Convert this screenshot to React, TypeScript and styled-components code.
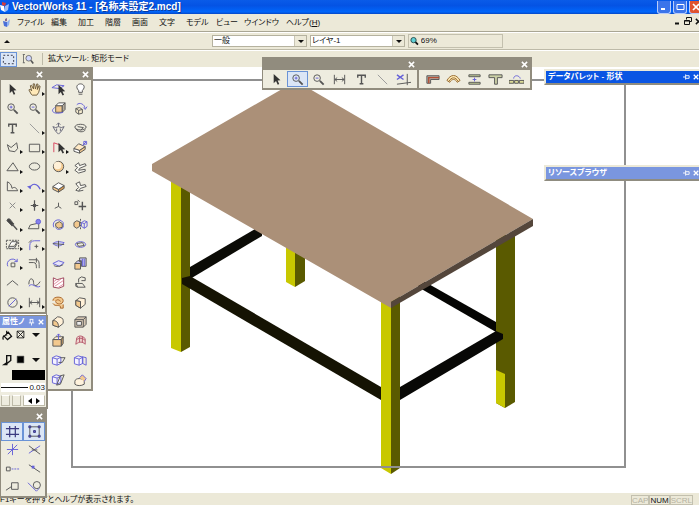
import React from "react";
import styled, { createGlobalStyle, css } from "styled-components";

const GlobalStyle = createGlobalStyle`
  * { box-sizing: border-box; }
  html, body, #root { height: 100%; }
  body {
    margin: 0;
    overflow: hidden;
    font: 8px/12px "Liberation Sans", "Noto Sans CJK JP", sans-serif;
    font-feature-settings: "palt";
    color: #111;
  }
  button, select, input { font: inherit; font-feature-settings: inherit; color: inherit; }
  button { border: 0; padding: 0; background: none; }
`;

const face = "#ece9d8";
const panel = "#eeecdf";
const shade = "#918c7e";

/* ---------- icons ---------- */

const blue = "#6460d8";
const tan = "#f3c98e";
const cursor = <path d="M5 2v10l2.500-2.300 1.800 3.800 1.600-.8-1.700-3.700 3-.2z" fill="#333" stroke="none" />;
const magnifier = (
  <>
    <circle cx="6.500" cy="6.500" r="3.500" />
    <path d="M9.500 9.500l4 4" strokeWidth="2" />
    <path d="M5 6.500h3" stroke={blue} />
  </>
);
const block = (
  <>
    <path d="M2 8l6 3v3l-6-3z" fill={tan} />
    <path d="M8 11l6-4v3l-6 4z" fill="#d79b52" />
    <path d="M2 8l6-4 6 3-6 4z" fill="#fff" />
  </>
);
const cube = (
  <>
    <path d="M3 6h7v7H3z" fill={tan} />
    <path d="M3 6l3-3h7l-3 3z" fill="#fff" />
    <path d="M10 6l3-3v7l-3 3z" fill="#b6ad9d" />
  </>
);
const wireCube = <path d="M1.500 5l4-2 5 1.500V11l-4 2-5-1.500zM1.500 5l5 1.500 4-2M6.500 6.500V13" stroke={blue} fill="#f4f2ff" />;

const glyphs: Record<string, React.ReactNode> = {
  arrow: cursor,
  hand: (
    <path
      d="M4.500 13L2 8.500 3 7.500l2 2L3.500 4l1.200-.5L7 7.500 6.500 2H8l1 5.500L10.500 2l1.300.5L11 8l1.800-4 1.200.6L12.500 11l-2 3h-5z"
      fill="#ffe9b8"
      stroke="#6b5a3c"
    />
  ),
  zoomIn: (
    <>
      {magnifier}
      <path d="M6.500 5v3" stroke={blue} />
    </>
  ),
  zoomOut: magnifier,
  text: <path d="M4 6V3.500h8V6M8 3.500V12M6 12.500h4" strokeWidth="1.500" />,
  line: <path d="M3 3l10 10" stroke="#999" />,
  poly: <path d="M2.500 5l4 3 6-5 1 6-3 3.500-6-1z" />,
  rect: <path d="M2.500 4.500h11v8h-11z" />,
  triangle: <path d="M2 12.500h12L8.500 4z" />,
  oval: <ellipse cx="8" cy="8" rx="5.500" ry="3.800" />,
  freeform: <path d="M2.500 3v9.500h11C12 9 10 8 7.500 10 7 6 5 4 2.500 3z" />,
  bezier: (
    <>
      <path d="M3 10C5 4 11 4 14 11" stroke={blue} strokeWidth="1.300" />
      <path d="M0 8l4-1v4z" fill={blue} stroke="none" />
    </>
  ),
  cross: <path d="M5 5l6 6M11 5l-6 6" stroke="#888" />,
  locus: <path d="M8 2.500v11M4 8h8M7 7h2v2H7z" strokeWidth="1.300" />,
  dropper: (
    <>
      <path d="M3 2l2 0 4 5-2 2-5-5z" fill="#444" />
      <path d="M8 8l5 5.500M7 9.500L9.500 7" strokeWidth="1.500" />
    </>
  ),
  reshape: (
    <>
      <path d="M1.500 12.500h11v-6l-9 2z" />
      <circle cx="12" cy="5" r="2.500" fill="#8580ec" stroke={blue} />
    </>
  ),
  offset: (
    <>
      <path d="M1.500 3.500h13v9h-13z" strokeDasharray="2 1" />
      <path d="M4 10l3-5h6l-3 5zM4 10v2h6l3-5V5" fill="#fff" />
    </>
  ),
  fillet: (
    <>
      <path d="M3 14V9c0-3 2-5 5-5h6" stroke={blue} />
      <path d="M5 3L2 6M8 10h4M10 8v4" />
    </>
  ),
  rotateBox: (
    <>
      <path d="M3 11C0 5 9 0 13 6M13 6V3M13 6h-3" stroke={blue} />
      <path d="M6.500 7.500h4v4h-4z" />
    </>
  ),
  trim: <path d="M2 4h8c3 0 3 3 3 9M2 7h5c3 0 3 3 3 6M10 2v5" />,
  chevron: <path d="M2 11l6-5 6 5" />,
  curve: (
    <>
      <path d="M2 10C2 2 7 3 7 8s4 4 7-1" />
      <path d="M2 12c4-5 7 3 12 0" stroke={blue} />
    </>
  ),
  circleSlash: (
    <>
      <circle cx="8" cy="8" r="5" />
      <path d="M4 12l8-8" stroke={blue} />
    </>
  ),
  dimension: <path d="M2.500 3v10M13.500 3v10M3 8h10M5.500 6L3 8l2.500 2M10.500 6L13 8l-2.500 2" />,
  planeCursor: (
    <>
      <path d="M1 6l5-3 8 1-5 3z" stroke={blue} />
      <g transform="translate(3 1)">{cursor}</g>
    </>
  ),
  bulb: <path d="M6 11V9C2 5 5 2 8 2s6 3 2 7v2zM6 13h4" fill="#fff" />,
  orbitCube: (
    <>
      <g transform="translate(2 -1)">{cube}</g>
      <path d="M4 7c-6 4 0 8 9 5" stroke={blue} />
    </>
  ),
  turnCube: (
    <>
      <path d="M3 8l4-1 3 2v4l-4 1-3-2zM3 8l3 2v4M6 10l4-1" fill="#f7edcf" />
      <path d="M4 4c3-3 8-1 9 4M11 7l2 2 2-3" stroke={blue} />
    </>
  ),
  fly: <path d="M8 2v4l3 1 3-1-3 5-3 3-3-3-3-5 3 1 3-1M6 4l2-2 2 2M6 8v3M10 8v3" stroke="#667" />,
  walk: (
    <>
      <ellipse cx="8" cy="6.500" rx="6" ry="3" />
      <path d="M3 8c2 5 10 4 10 1M5 6l6 1-3 3" />
    </>
  ),
  redCursor: (
    <>
      <path d="M3 13V3l6 2v6" stroke="#d8435c" />
      <g transform="translate(3 1)">{cursor}</g>
    </>
  ),
  slab: (
    <>
      <path d="M1 9l6 2v3l-6-2z" fill="#fff" />
      <path d="M7 11l6-4v3l-6 4z" fill={tan} />
      <path d="M1 9l5-5 7 3-6 4z" fill="#ffe9c4" />
      <path d="M10 6l4-4M11.500 1.500h3v3h-3z" stroke={blue} />
    </>
  ),
  sphere: (
    <>
      <circle cx="8" cy="8" r="5.500" fill={tan} />
      <circle cx="7" cy="7" r="4" fill="#fff0d7" stroke="none" />
    </>
  ),
  ribbon: <path d="M2 7l4-3 1 3 6-2 1 2-7 3-1 2 7-1v2l-7 2-4-3 3-3z" fill="#faf9f1" />,
  block,
  sheet: <path d="M3 5l4-2 1 4 5-1 1 2-6 2-2 3 5-1M3 5l3 4-3 3 3 1" fill="#faf9f1" />,
  axis: <path d="M8 5v4l-4 2M8 9l3 2" />,
  locus3d: (
    <>
      <path d="M10 4v9M6 9h8" strokeWidth="1.500" />
      <path d="M2 4h3v3H2zM5 2l2 2" />
    </>
  ),
  spin: (
    <>
      <path d="M3 11C0 4 9 0 13 6v5c-3 3-7 3-8 0" stroke={blue} />
      <path d="M5 7l4-2 3 2v4l-4 1-3-2z" fill={tan} />
    </>
  ),
  mirror: (
    <>
      <path d="M1 6l3-2 3 1v5l-3 2-3-2z" fill={tan} />
      <path d="M8 2v12" strokeDasharray="2 1" />
      <path d="M9 6l3-2 3 1v5l-3 2-3-2zM9 6l3 1 3-2M12 7v5" stroke={blue} />
    </>
  ),
  planes: (
    <>
      <path d="M2 7c4-3 8-2 12-1-3 4-7 5-12 1z" fill="#dfddf9" stroke={blue} />
      <path d="M8 4v8M2 7l12 1" />
    </>
  ),
  planeTurn: (
    <>
      <ellipse cx="8" cy="8" rx="5.500" ry="3" stroke={blue} />
      <path d="M4 7l6-1 2 3-6 1z" />
    </>
  ),
  planeFlat: (
    <>
      <path d="M2 8l6-3 6 2-5 4z" fill="#e6e4f8" stroke={blue} />
      <path d="M3 10c2 2 8 1 10-1" />
    </>
  ),
  blocks: (
    <>
      <path d="M2 8h6v6H2z" fill={tan} />
      <path d="M2 8l3-3h4L8 8zM7 2h7v9H9V6H7z" fill="#c4c1ea" />
      <path d="M10 3v8M12 3v8" stroke={blue} />
    </>
  ),
  hatch: (
    <>
      <path d="M2.500 3l4 2 7-2v9l-5 2-6-1z" fill="#fff" stroke="#9b4058" />
      <path d="M3 7l3-2M3 10l8-6M4 12l9-6M8 13l5-3" stroke="#e08ca0" />
    </>
  ),
  extrude: <path d="M3 9h7l3 4H5zM6 8V4l3-2 4 1v3M9 6h4M3 9v3l2 1" />,
  spiral: <path d="M2 6c0-5 11-5 11 0s-8 4-8 1 5-2 5 0M2 9c3 4 5 1 8 3v2h3v-4" fill={tan} stroke="#a8642b" />,
  solid: (
    <>
      <path d="M3 6l5 1v7l-5-3z" fill={tan} />
      <path d="M3 6l4-3 6 1v6l-5 4V7z" fill="#fff0d7" />
      <path d="M3 6l5 1v7l-5-3z" fill={tan} />
    </>
  ),
  filletCube: (
    <>
      <path d="M2 7l5-4c4 0 6 2 6 4v3l-5 4-6-2z" fill="#fff0d7" />
      <path d="M2 7c4 0 6 2 6 7l-6-2z" fill={tan} />
    </>
  ),
  shell: (
    <>
      <path d="M2 6h9v8H2zM2 6l3-3h9v8l-3 3M11 6l3-3" fill="#d5c6b2" />
      <path d="M4 8h5v4H4z" fill="#eee" />
    </>
  ),
  pushUp: (
    <>
      <path d="M2 7l3-3h8l-2 3z" fill="#fff0d7" />
      <path d="M2 7h9v7H2z" fill={tan} />
      <path d="M11 7l2-3v7l-2 3z" fill="#c9a06a" />
      <path d="M8 7V1M6 3l2-2 2 2" stroke={blue} />
    </>
  ),
  net: <path d="M3 12l1-7c3-3 6-2 9 1v6c-3-3-6-3-10 0zM4 7c3-2 6-2 9 1M7 4v6M10 4v6" stroke="#b4596b" fill="#f0d5cf" />,
  cubeCut: (
    <>
      {wireCube}
      <path d="M10 5h5l-3 5H8" />
    </>
  ),
  cubeSide: (
    <>
      {wireCube}
      <path d="M10 4l4 1v8l-4-2z" stroke={blue} />
    </>
  ),
  cubeSlant: (
    <>
      {wireCube}
      <path d="M14 3l-4 10-4 1 4-10z" />
    </>
  ),
  drum: (
    <>
      <path d="M2 10c0-4 9-4 10 0v3c-3 2-8 2-10 0z" fill="#fff3dd" />
      <path d="M7 6l3-3 4 4-2 3" fill={tan} stroke={blue} />
    </>
  ),
  grid: <path d="M5 2v12M11 2v12M1 5h14M1 11h14" stroke="#3b3a80" strokeWidth="1.300" />,
  snapBox: (
    <>
      <path d="M3 3h10v10H3z" />
      <path d="M2 2h2v2H2zM12 2h2v2h-2zM2 12h2v2H2zM12 12h2v2h-2zM7 7h2v2H7z" fill={blue} stroke="#3b3a80" />
    </>
  ),
  star: <path d="M8 2v12M3 13L13 3M2 8h12" stroke={blue} />,
  crossing: (
    <>
      <path d="M2 12l12-8" stroke={blue} />
      <path d="M2 4l12 9M5 8.500h6" />
    </>
  ),
  boxDash: (
    <>
      <path d="M1.500 6.500h4v4h-4z" />
      <path d="M7 8.500h9" stroke={blue} strokeDasharray="2 1" />
    </>
  ),
  slopeDot: (
    <>
      <path d="M2 4l12 8" />
      <path d="M5 5h3v3H5z" fill={blue} stroke="none" />
    </>
  ),
  boxEdge: <path d="M7 4h7v7H7zM1 12l6-4" />,
  circleEdge: (
    <>
      <circle cx="10.500" cy="6.500" r="3.800" />
      <path d="M1 4l9 9 3-3" stroke={blue} />
    </>
  ),
  scissors: (
    <>
      <path d="M1 3l7 5M1 8l7-5" stroke={blue} strokeWidth="1.500" />
      <path d="M1 13l15-2M12 2v12" />
    </>
  ),
  wall: (
    <>
      <path d="M2 12V4h13v4H6v4z" fill="#b3aaa0" />
      <path d="M4 12V6h11" stroke="#b34f35" strokeWidth="1.500" />
    </>
  ),
  arcWall: (
    <>
      <path d="M1 9c4-7 10-7 14 0l-3 2c-2-4-6-4-8 0z" fill="#ffe9b4" stroke="#93682d" />
      <path d="M3 10c3-5 7-5 10 0" stroke="#93682d" />
    </>
  ),
  wallJoin: (
    <>
      <path d="M2 3h12v2H2zM2 11h12v2H2z" fill="#c5cf9a" />
      <path d="M8 6v4M6 8h4" stroke={blue} />
    </>
  ),
  wallTee: <path d="M1 3h14v3h-5v7H7V6H1z" fill="#cbd0a6" />,
  wallHeal: (
    <>
      <path d="M0 9h5v3H0zM11 9h5v3h-5zM6 9h4v3H6z" fill="#dd9" />
      <path d="M5 7c0-4 6-4 7 0" stroke={blue} />
    </>
  ),
  marquee: <path d="M2.500 3.500h11v9h-11z" strokeDasharray="2 2" stroke="#334" />,
  areaZoom: (
    <>
      <path d="M2 2v11M1 2h3M1 13h3" />
      <circle cx="9" cy="7" r="3.800" fill="#cfd6ff" />
      <path d="M12 10l3 4" strokeWidth="2" />
    </>
  ),
  bucket: <path d="M4 9l5-5 4 5-5 4zM7 2v6M4 8c-2 2-2 4-1 5" strokeWidth="1.500" stroke="#111" />,
  noFill: <path d="M2 2h12v12H2zM2 2l12 12M14 2L2 14" strokeWidth="1.500" stroke="#111" />,
  pen: <path d="M7 2h5v6l-4 3H7zM7 11l-3 2h4" strokeWidth="1.700" stroke="#111" />,
  black: <path d="M2 2h12v12H2z" fill="#000" />,
};

const Svg = styled.svg`
  display: block;
  flex: none;
  fill: none;
  stroke: #555;
`;

const Icon = ({ name, size = 15 }: { name: string; size?: number }) => (
  <Svg width={size} height={size} viewBox="0 0 16 16" aria-hidden="true">
    {glyphs[name]}
  </Svg>
);

const Caret = styled.span`
  width: 0;
  height: 0;
  flex: none;
  border: 4px solid transparent;
  border-width: 4px 4px 0;
  border-top-color: #111;
`;

const Cross = ({ size = 7 }: { size?: number }) => (
  <svg width={size} height={size} viewBox="0 0 8 8" fill="none" stroke="currentColor" strokeWidth="1.700" aria-hidden="true">
    <path d="M1 1l6 6M7 1L1 7" />
  </svg>
);

const Pin = ({ upright }: { upright?: boolean }) => (
  <svg width="7" height="8" viewBox="0 0 8 8" fill="none" stroke="currentColor" aria-hidden="true">
    {upright ? <path d="M2.500 1v4M5.500 1v4M1 5h6M4 5v3M2 1h4" /> : <path d="M3 1v6M3 2.500h4v3H3M0 4h3" />}
  </svg>
);

/* ---------- window frame ---------- */

const Window = styled.div`
  position: relative;
  display: flex;
  flex-direction: column;
  height: 100vh;
  overflow: hidden;
  background: ${face};
`;

const TitleBar = styled.header`
  display: flex;
  align-items: center;
  height: 14px;
  flex: none;
  gap: 3px;
  padding-right: 1px;
  color: #fff;
  background: linear-gradient(#0a5be8, #0453e4 40%, #0066fb 85%, #0646c4);
`;

const AppTitle = styled.h1`
  flex: 1;
  margin: 0;
  font: bold 10px/12px "Liberation Sans", "Noto Sans CJK JP", sans-serif;
  text-shadow: 1px 1px #0a3a9c;
  white-space: nowrap;
`;

const WindowButtons = styled.div`
  display: flex;
  gap: 2px;
  margin-right: -5px;
`;

const WindowButton = styled.button<{ $close?: boolean }>`
  display: grid;
  place-items: center;
  width: 14px;
  height: 13px;
  border: 1px solid #b9cdfa;
  border-top: 0;
  border-radius: 0 0 3px 3px;
  color: #fff;
  background: ${(p) => (p.$close ? "#e0532f" : "#3b74ea")};
`;

const MenuBar = styled.nav`
  display: flex;
  align-items: center;
  flex: none;
  height: 18px;
  padding-left: 2px;
  border-bottom: 1px solid #a9a694;
`;

const MenuList = styled.div`
  flex: 1;
  display: grid;
  grid-template-columns: 34px repeat(5, 27px) 30px 28px 42px auto;
  justify-content: start;
  padding-left: 5px;
`;

const MenuItem = styled.button`
  text-align: left;
  white-space: nowrap;
`;

const DocButtons = styled.div`
  display: flex;
  gap: 3px;
  margin-right: -3px;
  color: #111;
`;

const Bar = styled.div`
  display: flex;
  align-items: center;
  flex: none;
  height: 18px;
  border-top: 1px solid #fff;
  border-bottom: 1px solid #bdbaa8;
`;

const SelectorBar = styled(Bar)`
  gap: 3px;
  padding-left: 4px;
`;

const UpMark = styled.span`
  border: 3px solid transparent;
  border-width: 0 3px 3px;
  border-bottom-color: #111;
  margin-right: 199px;
`;

const SelectBox = styled.label`
  position: relative;
  display: flex;
  align-items: center;
  flex: 0 1 95px;
  height: 12px;
  border: 1px solid #b5b29f;
  background: #fff;

  select {
    appearance: none;
    width: 100%;
    height: 10px;
    padding: 0 14px 0 1px;
    border: 0;
    line-height: 10px;
    background: transparent;
  }
`;

const SelectArrow = styled.span`
  position: absolute;
  inset: 0 0 0 auto;
  width: 12px;
  display: grid;
  place-items: center;
  border-left: 1px solid #c9c6b5;
  background: ${face};
  pointer-events: none;

  span { border-width: 3px 3px 0; }
`;

const ZoomBox = styled.label`
  display: flex;
  align-items: center;
  gap: 2px;
  flex: 0 1 95px;
  height: 14px;
  padding-left: 1px;
  border: 1px solid #c3c0ae;

  input {
    width: 100%;
    min-width: 0;
    height: 11px;
    padding: 0;
    border: 0;
    background: transparent;
  }
`;

const ModeBar = styled(Bar)`
  height: 17px;
  gap: 5px;
  border-bottom: 0;
`;

const ModeText = styled.span`
  padding-left: 5px;
  border-left: 1px solid #bdbaa8;
  margin-left: 3px;
`;

const Workspace = styled.main`
  flex: 1;
  min-height: 0;
  background: #fff;

  svg { display: block; width: 100%; height: 100%; }
`;

const StatusBar = styled.footer`
  display: flex;
  align-items: flex-end;
  justify-content: space-between;
  flex: none;
  height: 12px;
  padding-right: 6px;
`;

const Help = styled.span`
  line-height: 10px;
  white-space: nowrap;
`;

const Locks = styled.div`
  display: flex;
`;

const Lock = styled.span<{ $on?: boolean }>`
  height: 10px;
  border: 1px solid #c3c0ae;
  line-height: 9px;
  color: ${(p) => (p.$on ? "#111" : "#b5b2a2")};
`;

/* ---------- floating palettes ---------- */

type Place = { $top: number; $left?: number; $right?: number; $width: number };

const Palette = styled.section<Place>`
  position: absolute;
  top: ${(p) => p.$top}px;
  ${(p) => (p.$right !== undefined ? css`right: ${p.$right}px;` : css`left: ${p.$left}px;`)}
  width: ${(p) => p.$width}px;
  border: solid ${shade};
  border-width: 1px 2px 2px 1px;
  background: ${panel};
`;

const PaletteHead = styled.div<{ $tone?: "active" | "idle" }>`
  display: flex;
  align-items: center;
  gap: 3px;
  height: 12px;
  padding: 0 2px;
  color: #fff;
  font-weight: bold;
  white-space: nowrap;
  background: ${(p) => (p.$tone === "active" ? "#0a55e3" : p.$tone === "idle" ? "#7a96df" : shade)};

  h2 {
    flex: 1;
    margin: 0;
    font: inherit;
  }

  button { display: flex; }
`;

const ToolGrid = styled.div<{ $rows: number; $height: number }>`
  display: grid;
  grid-template-columns: 1fr 1fr;
  grid-template-rows: repeat(${(p) => p.$rows}, 1fr);
  height: ${(p) => p.$height}px;
`;

const ToolRow = styled.div`
  display: flex;
  height: 18px;
  padding: 1px 3px;
`;

const ToolButton = styled.button<{ $on?: boolean; $more?: boolean }>`
  position: relative;
  display: flex;
  align-items: center;
  justify-content: center;
  flex: 1;
  min-width: 0;
  min-height: 0;
  ${(p) =>
    p.$on &&
    css`
      background: #dbe6f6;
      box-shadow: inset 0 0 0 1px #6a93d6;
    `}
  ${(p) =>
    p.$more &&
    css`
      &::after {
        content: "";
        position: absolute;
        right: 0;
        bottom: 3px;
        border: 2px solid transparent;
        border-width: 2px 0 2px 3px;
        border-left-color: #111;
      }
    `}
`;

const ModeButton = styled(ToolButton)`
  flex: 0 0 17px;
  height: 15px;
`;

const Docked = styled(Palette)`
  border-color: ${face} ${face} #8f8c80;
  border-width: 2px 0 2px 2px;
  background: ${face};

  ${PaletteHead} { padding-right: 0; }
`;

const AttributeBody = styled.div`
  display: grid;
  gap: 3px;
  padding: 1px;
`;

const AttributeRow = styled.div<{ $height: number }>`
  display: grid;
  grid-template-columns: 13px 13px 1fr;
  align-items: start;
  justify-items: center;
  height: ${(p) => p.$height}px;

  button { display: flex; }
  button:nth-child(2) { padding-top: 1px; }
  button:last-child { padding-top: 4px; }
`;

const Swatch = styled.button`
  height: 10px;
  margin-left: 11px;
  background: #000;
`;

const Thickness = styled.button`
  display: flex;
  align-items: center;
  height: 9px;
  gap: 1px;
  line-height: 9px;
  background: #fff;

  &::before {
    content: "";
    flex: 1;
    border-top: 1px solid #111;
  }
`;

const Markers = styled.div`
  display: grid;
  grid-template-columns: 9px 9px 1fr;
  gap: 2px;
  height: 11px;

  button {
    display: grid;
    place-items: center;
    border: 1px solid #bdbaa8;
    border-top-color: #fff;
  }
  button:last-child { background: #fff; }
`;

type Tool = [name: string, label: string, more?: boolean, on?: boolean];

const Tools = ({ items }: { items: Tool[] }) => (
  <>
    {items.map(([name, label, more, on]) => (
      <ToolButton key={label} aria-label={label} $more={more} $on={on}>
        <Icon name={name} />
      </ToolButton>
    ))}
  </>
);

const CloseHead = () => (
  <PaletteHead>
    <h2 />
    <button aria-label="閉じる">
      <Cross />
    </button>
  </PaletteHead>
);

const basicTools: Tool[] = [
  ["arrow", "セレクション"], ["hand", "パン", true],
  ["zoomIn", "拡大"], ["zoomOut", "縮小"],
  ["text", "文字"], ["line", "直線", true],
  ["poly", "多角形", true], ["rect", "四角形", true],
  ["triangle", "三角形", true], ["oval", "長円"],
  ["freeform", "曲線", true], ["bezier", "ベジェ", true],
  ["cross", "基準点", true], ["locus", "シンボル", true],
  ["dropper", "アイドロッパ", true], ["reshape", "変形", true],
  ["offset", "オフセット", true], ["fillet", "フィレット", true],
  ["rotateBox", "回転", true], ["trim", "トリミング"],
  ["chevron", "結合"], ["curve", "スプライン"],
  ["circleSlash", "直径", true], ["dimension", "寸法", true],
];

const modelTools: Tool[] = [
  ["planeCursor", "3Dセレクション"], ["bulb", "光源"],
  ["orbitCube", "フライオーバー"], ["turnCube", "視点回転"],
  ["fly", "フライスルー"], ["walk", "ウォークスルー"],
  ["redCursor", "3D変形", true], ["slab", "柱状体"],
  ["sphere", "球", true], ["ribbon", "曲面"],
  ["block", "直方体"], ["sheet", "面"],
  ["axis", "3D基準点"], ["locus3d", "3Dシンボル"],
  ["spin", "3D回転"], ["mirror", "3Dミラー"],
  ["planes", "作業平面"], ["planeTurn", "平面回転"],
  ["planeFlat", "平面移動"], ["blocks", "整列"],
  ["hatch", "断面"], ["extrude", "押し出し"],
  ["spiral", "螺旋"], ["solid", "ソリッド"],
  ["filletCube", "3Dフィレット"], ["shell", "シェル"],
  ["pushUp", "プッシュ"], ["net", "NURBS"],
  ["cubeCut", "切断"], ["cubeSide", "投影"],
  ["cubeSlant", "傾斜"], ["drum", "抽出"],
];

const snapTools: Tool[] = [
  ["grid", "グリッドスナップ", false, true], ["snapBox", "図形スナップ", false, true],
  ["star", "角度スナップ"], ["crossing", "交点スナップ"],
  ["boxDash", "スマートポイント"], ["slopeDot", "定点スナップ"],
  ["boxEdge", "スマートエッジ"], ["circleEdge", "接線スナップ"],
];

const viewTools: Tool[] = [
  ["arrow", "選択"], ["zoomIn", "拡大表示", false, true], ["zoomOut", "縮小表示"],
  ["dimension", "寸法線"], ["text", "文字入力"], ["line", "線"], ["scissors", "切り取り"],
];

const wallTools: Tool[] = [
  ["wall", "壁"], ["arcWall", "円弧壁"], ["wallJoin", "壁結合"], ["wallTee", "T字結合"], ["wallHeal", "壁修復"],
];

const menus = ["ファイル", "編集", "加工", "階層", "画面", "文字", "モデル", "ビュー", "ウインドウ", "ヘルプ(H)"];

const Drawing = () => (
  <svg viewBox="0 67 699 426" role="img" aria-label="テーブルの3Dモデル">
    {/* back leg */}
    <path d="M286 240h9v47l-9-5z" fill="#c8c800" />
    <path d="M295 240h10v41l-10 6z" fill="#5a5a00" />
    {/* left leg */}
    <path d="M171 175h10v177l-10-4z" fill="#c8c800" />
    <path d="M181 175h9v172l-9 5z" fill="#5a5a00" />
    {/* left rails */}
    <path d="M190 267l72-42v11l-72 43z" fill="#0b0b06" />
    <path d="M182 278l8-2 191 111v13L182 284z" fill="#151303" />
    {/* right leg */}
    <path d="M496 235h19v167l-10 6-9-5z" fill="#5a5a00" />
    <path d="M496 370l9 4v34l-9-5z" fill="#c8c800" />
    {/* right rails */}
    <path d="M418 278l78 44v10l-78-45z" fill="#050503" />
    <path d="M400 387l96-56 7 3v5l-103 61z" fill="#080806" />
    {/* front leg */}
    <path d="M381 295h10v179l-10-6z" fill="#c8c800" />
    <path d="M391 295h9v173l-9 6z" fill="#5a5a00" />
    {/* top */}
    <path d="M152 164L296 81l237 138-142 83v6L152 171z" fill="#ab9078" />
    <path d="M391 302l142-83v7l-142 82z" fill="#54463b" />
    <path d="M72 80h553v387H72z" fill="none" stroke="#909090" strokeWidth="2" />
  </svg>
);

const AppLogo = () => (
  <svg width="9" height="11" viewBox="0 0 9 11" aria-hidden="true">
    <path d="M0 3l4 1 1 6-4-2z" fill="#fff" />
    <path d="M5 4l4-2-1 6-3 2z" fill="#9dbbf5" />
    <path d="M2 0l4 1-1 3-3-1z" fill="#d33c3c" />
  </svg>
);

const DocLogo = () => (
  <svg width="10" height="10" viewBox="0 0 10 10" aria-hidden="true">
    <path d="M1 3l4 1v5L2 8z" fill="#4a6fd8" />
    <path d="M5 4l3-3-1 6-2 2z" fill="#8fb0f0" />
    <path d="M3 1l2-1v3H3z" fill="#8a6a8a" />
  </svg>
);

const DockHead = ({ title, tone }: { title: string; tone: "active" | "idle" }) => (
  <PaletteHead $tone={tone}>
    <h2>{title}</h2>
    <button aria-label="固定">
      <Pin />
    </button>
    <button aria-label="閉じる">
      <Cross size={6} />
    </button>
  </PaletteHead>
);

export default function App() {
  return (
    <Window>
      <GlobalStyle />
      <TitleBar>
        <AppLogo />
        <AppTitle>VectorWorks 11 - [名称未設定2.mcd]</AppTitle>
        <WindowButtons>
          <WindowButton aria-label="最小化">
            <svg width="8" height="8" viewBox="0 0 8 8"><path d="M1 6h4" stroke="#fff" strokeWidth="2" /></svg>
          </WindowButton>
          <WindowButton aria-label="最大化">
            <svg width="9" height="8" viewBox="0 0 9 8"><path d="M1 1.500h7v5H1z" fill="none" stroke="#fff" /></svg>
          </WindowButton>
          <WindowButton aria-label="終了" $close>
            <Cross size={8} />
          </WindowButton>
        </WindowButtons>
      </TitleBar>

      <MenuBar>
        <DocLogo />
        <MenuList>
          {menus.map((m) => (
            <MenuItem key={m}>{m.endsWith("(H)") ? <>ヘルプ(<u>H</u>)</> : m}</MenuItem>
          ))}
        </MenuList>
        <DocButtons>
          <button aria-label="文書を最小化">
            <svg width="7" height="8" viewBox="0 0 7 8"><path d="M1 6.500h4" stroke="#111" strokeWidth="2" /></svg>
          </button>
          <button aria-label="文書を元に戻す">
            <svg width="8" height="8" viewBox="0 0 8 8" fill="none" stroke="#111"><path d="M2.500 2.500v-2h5v4h-2M.5 3.500h5v4h-5zM.5 4h5" /></svg>
          </button>
          <button aria-label="文書を閉じる">
            <Cross />
          </button>
        </DocButtons>
      </MenuBar>

      <SelectorBar>
        <UpMark />
        <SelectBox>
          <select aria-label="クラス">
            <option>一般</option>
          </select>
          <SelectArrow><Caret /></SelectArrow>
        </SelectBox>
        <SelectBox>
          <select aria-label="レイヤ">
            <option>レイヤ-1</option>
          </select>
          <SelectArrow><Caret /></SelectArrow>
        </SelectBox>
        <ZoomBox>
          <svg width="10" height="10" viewBox="0 0 10 10" aria-hidden="true">
            <path d="M6 6l3 3" stroke="#111" strokeWidth="2" />
            <circle cx="4" cy="4" r="3" fill="#5fd0d6" stroke="#244" />
          </svg>
          <input aria-label="表示倍率" defaultValue="69%" />
        </ZoomBox>
      </SelectorBar>

      <ModeBar>
        <ModeButton aria-label="矩形モード" $on>
          <Icon name="marquee" />
        </ModeButton>
        <button aria-label="対話モード">
          <Icon name="areaZoom" size={12} />
        </button>
        <ModeText>拡大ツール: 矩形モード</ModeText>
      </ModeBar>

      <Workspace>
        <Drawing />
      </Workspace>

      <StatusBar>
        <Help>F1キーを押すとヘルプが表示されます。</Help>
        <Locks>
          <Lock>CAP</Lock>
          <Lock $on>NUM</Lock>
          <Lock>SCRL</Lock>
        </Locks>
      </StatusBar>

      <Palette $top={67} $left={0} $width={47}>
        <CloseHead />
        <ToolGrid $rows={12} $height={232}>
          <Tools items={basicTools} />
        </ToolGrid>
      </Palette>

      <Palette $top={67} $left={46} $width={47}>
        <CloseHead />
        <ToolGrid $rows={16} $height={309}>
          <Tools items={modelTools} />
        </ToolGrid>
      </Palette>

      <Palette $top={315} $left={-1} $width={49}>
        <PaletteHead $tone="idle">
          <h2>属性ノ</h2>
          <button aria-label="固定">
            <Pin upright />
          </button>
          <button aria-label="閉じる">
            <Cross size={6} />
          </button>
        </PaletteHead>
        <AttributeBody>
          <AttributeRow $height={22}>
            <button aria-label="面の種類"><Icon name="bucket" size={13} /></button>
            <button aria-label="面なし"><Icon name="noFill" size={9} /></button>
            <button aria-label="面メニュー"><Caret /></button>
          </AttributeRow>
          <AttributeRow $height={13}>
            <button aria-label="線の種類"><Icon name="pen" size={13} /></button>
            <button aria-label="線の色"><Icon name="black" size={9} /></button>
            <button aria-label="線メニュー"><Caret /></button>
          </AttributeRow>
          <Swatch aria-label="ペンカラー" />
          <Thickness aria-label="線の太さ">0.03</Thickness>
          <Markers>
            <button aria-label="始点マーカー" />
            <button aria-label="終点マーカー" />
            <button aria-label="マーカー">
              <svg width="14" height="6" viewBox="0 0 14 6" aria-hidden="true"><path d="M5 0v6L1 3zM9 0v6l4-3z" /></svg>
            </button>
          </Markers>
        </AttributeBody>
      </Palette>

      <Palette $top={409} $left={0} $width={47}>
        <CloseHead />
        <ToolGrid $rows={4} $height={74}>
          <Tools items={snapTools} />
        </ToolGrid>
      </Palette>

      <Palette $top={57} $left={262} $width={157}>
        <CloseHead />
        <ToolRow>
          <Tools items={viewTools} />
        </ToolRow>
      </Palette>

      <Palette $top={57} $left={418} $width={114}>
        <CloseHead />
        <ToolRow>
          <Tools items={wallTools} />
        </ToolRow>
      </Palette>

      <Docked $top={69} $right={0} $width={155}>
        <DockHead title="データパレット - 形状" tone="active" />
      </Docked>

      <Docked $top={165} $right={0} $width={155}>
        <DockHead title="リソースブラウザ" tone="idle" />
      </Docked>
    </Window>
  );
}
